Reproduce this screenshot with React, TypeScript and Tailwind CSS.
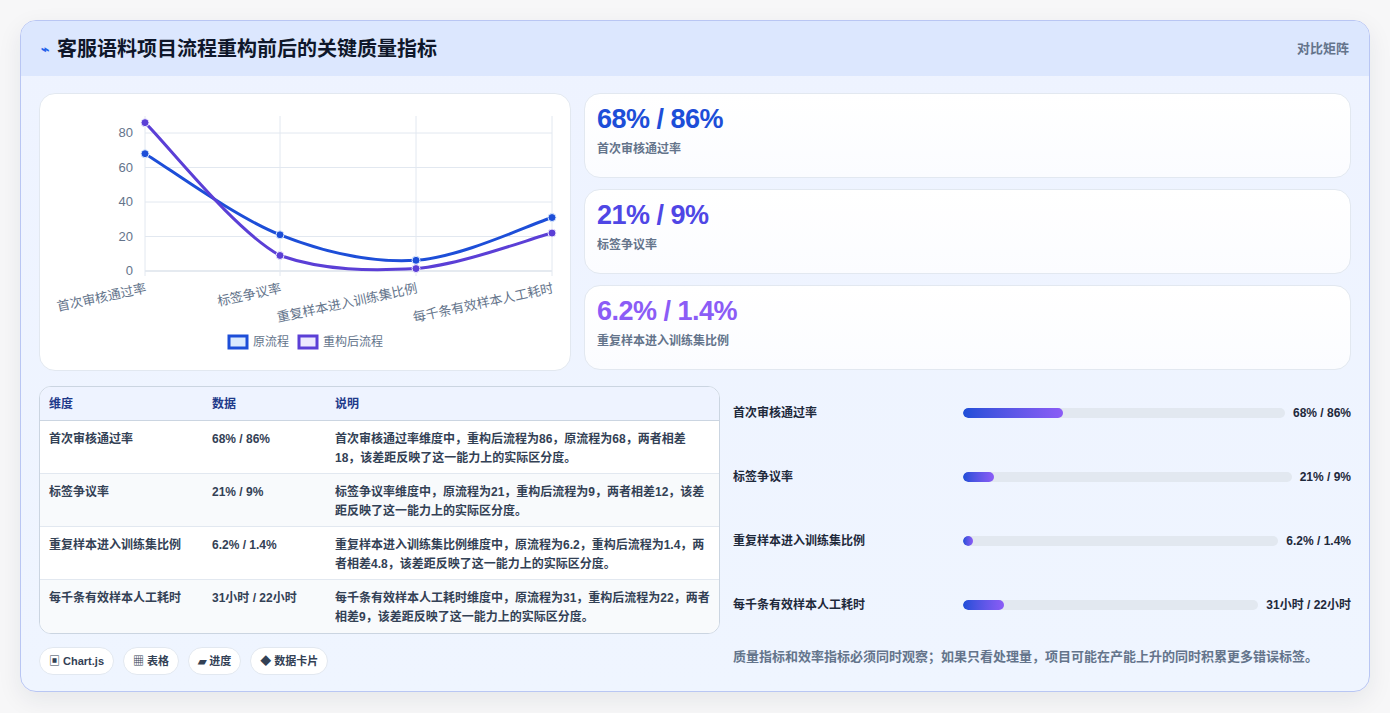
import React from 'react';

const font = { fontFamily: '"Liberation Sans", "Noto Sans CJK SC", sans-serif' };

const rows = [
  { k: '首次审核通过率', v: '68% / 86%', d: '首次审核通过率维度中，重构后流程为86，原流程为68，两者相差18，该差距反映了这一能力上的实际区分度。', p: 31 },
  { k: '标签争议率', v: '21% / 9%', d: '标签争议率维度中，原流程为21，重构后流程为9，两者相差12，该差距反映了这一能力上的实际区分度。', p: 9.5 },
  { k: '重复样本进入训练集比例', v: '6.2% / 1.4%', d: '重复样本进入训练集比例维度中，原流程为6.2，重构后流程为1.4，两者相差4.8，该差距反映了这一能力上的实际区分度。', p: 3.2 },
  { k: '每千条有效样本人工耗时', v: '31小时 / 22小时', d: '每千条有效样本人工耗时维度中，原流程为31，重构后流程为22，两者相差9，该差距反映了这一能力上的实际区分度。', p: 14 },
];

// chart geometry, relative to the chart card
const xs = [105, 240, 376, 512];
const y0 = 177;
const sc = 1.725;
const orig = [68, 21, 6.2, 31];
const next = [86, 9, 1.4, 22];

function smooth(vals: number[]) {
  const pts = vals.map((v, i) => [xs[i], y0 - v * sc]);
  let d = `M${pts[0][0]},${pts[0][1]}`;
  for (let i = 0; i < pts.length - 1; i++) {
    const p0 = pts[Math.max(0, i - 1)];
    const p1 = pts[i];
    const p2 = pts[i + 1];
    const p3 = pts[Math.min(pts.length - 1, i + 2)];
    const t = 0.33;
    const c1 = [p1[0] + (p2[0] - p0[0]) * t / 2, Math.min(y0, p1[1] + (p2[1] - p0[1]) * t / 2)];
    const c2 = [p2[0] - (p3[0] - p1[0]) * t / 2, Math.min(y0, p2[1] - (p3[1] - p1[1]) * t / 2)];
    d += ` C${c1[0]},${c1[1]} ${c2[0]},${c2[1]} ${p2[0]},${p2[1]}`;
  }
  return { d, pts };
}

function Chart() {
  const a = smooth(orig);
  const b = smooth(next);
  return (
    <svg width="531" height="277" viewBox="0 0 531 277" className="block">
      {[0, 20, 40, 60, 80].map((v) => (
        <g key={v}>
          <line x1={105} x2={512} y1={y0 - v * sc} y2={y0 - v * sc} stroke={v === 0 ? '#cbd5e1' : '#e2e8f0'} />
          <text x={93} y={y0 - v * sc + 4} textAnchor="end" fontSize="13" fill="#64748b">{v}</text>
        </g>
      ))}
      {xs.map((x) => (
        <line key={x} x1={x} x2={x} y1={22} y2={y0 + 5} stroke="#e2e8f0" />
      ))}
      {['首次审核通过率', '标签争议率', '重复样本进入训练集比例', '每千条有效样本人工耗时'].map((t, i) => (
        <text key={t} x={xs[i]} y={y0 + 12} textAnchor="end" fontSize="13" fill="#64748b" transform={`rotate(-12 ${xs[i]} ${y0 + 12})`} dominantBaseline="hanging">{t}</text>
      ))}
      <path d={a.d} fill="none" stroke="#1d4ed8" strokeWidth="3" />
      <path d={b.d} fill="none" stroke="#5b3fd6" strokeWidth="3" />
      {a.pts.map((p, i) => <circle key={'a' + i} cx={p[0]} cy={p[1]} r="4" fill="#1d4ed8" stroke="#dbeafe" strokeWidth="1" />)}
      {b.pts.map((p, i) => <circle key={'b' + i} cx={p[0]} cy={p[1]} r="4" fill="#5b3fd6" stroke="#ede9fe" strokeWidth="1" />)}
      <rect x={189} y={242} width={18} height={12} fill="#dbeafe" stroke="#1d4ed8" strokeWidth="3" />
      <text x={213} y={252} fontSize="12" fill="#64748b">原流程</text>
      <rect x={259} y={242} width={18} height={12} fill="#ede9fe" stroke="#5b3fd6" strokeWidth="3" />
      <text x={283} y={252} fontSize="12" fill="#64748b">重构后流程</text>
    </svg>
  );
}

export default function App() {
  return (
    <div className="min-h-screen bg-[#f7f7f8] p-5" style={font}>
      <div className="rounded-2xl border border-[#b9c6f3] bg-gradient-to-b from-[#eef3ff] to-[#eff5ff] overflow-hidden shadow-[0_8px_24px_rgba(30,41,59,0.08)]">
        <div className="flex items-center justify-between h-[55px] bg-[#dce7fe] px-5">
          <div className="flex items-center gap-2">
            <span className="text-[#2563eb] text-sm font-bold">⌁</span>
            <h1 className="text-[20px] font-bold text-[#0f172a]">客服语料项目流程重构前后的关键质量指标</h1>
          </div>
          <span className="text-[13px] font-semibold text-[#64748b]">对比矩阵</span>
        </div>
        <div className="px-[18px] pt-[17px] pb-4">
          <div className="flex gap-[13px]">
            <div className="w-[532px] h-[278px] rounded-2xl bg-white border border-[#e2e8f0]">
              <Chart />
            </div>
            <div className="flex-1 flex flex-col gap-[11px]">
              {[
                ['68% / 86%', '首次审核通过率', 'text-[#1d4ed8]'],
                ['21% / 9%', '标签争议率', 'text-[#4f46e5]'],
                ['6.2% / 1.4%', '重复样本进入训练集比例', 'text-[#8b5cf6]'],
              ].map(([v, l, c]) => (
                <div key={l} className="h-[85px] rounded-2xl bg-gradient-to-b from-white to-[#fbfcff] border border-[#e2e8f0] px-[12px] pt-[5px]">
                  <div className={`text-[27px] font-bold tracking-[-0.5px] ${c}`}>{v}</div>
                  <div className="text-[12px] font-semibold text-[#64748b]">{l}</div>
                </div>
              ))}
            </div>
          </div>
          <div className="flex gap-[13px] mt-[15px]">
            <div className="w-[681px]">
              <div className="rounded-xl border border-[#cbd5e1] overflow-hidden bg-white">
                <div className="flex h-[34px] items-center bg-[#eef3ff] border-b border-[#cbd5e1] text-[12px] font-bold text-[#1e3a8a]">
                  <div className="w-[172px] pl-[9px]">维度</div>
                  <div className="w-[123px]">数据</div>
                  <div className="flex-1">说明</div>
                </div>
                {rows.map((r, i) => (
                  <div key={r.k} className={`flex h-[53px] pt-[9px] text-[12px] font-semibold text-[#334155] leading-[19px] ${i < 3 ? 'border-b border-[#e2e8f0]' : ''} ${i % 2 ? 'bg-[#f8fafc]' : 'bg-white'}`}>
                    <div className="w-[172px] pl-[9px]">{r.k}</div>
                    <div className="w-[123px]">{r.v}</div>
                    <div className="flex-1 pr-2">{r.d}</div>
                  </div>
                ))}
              </div>
              <div className="flex gap-[9px] mt-[13px]">
                {['▣ Chart.js', '▦ 表格', '▰ 进度', '◆ 数据卡片'].map((t) => (
                  <span key={t} className="h-[28px] px-[9px] flex items-center rounded-full bg-white border border-[#e2e8f0] text-[11px] font-semibold text-[#334155]">{t}</span>
                ))}
              </div>
            </div>
            <div className="flex-1 -mt-[5px]">
              {rows.map((r) => (
                <div key={r.k} className="flex items-center h-[64px] text-[12px] font-semibold text-[#1e293b]">
                  <div className="w-[230px] shrink-0">{r.k}</div>
                  <div className="flex-1 h-[10px] rounded-full bg-[#e2e8f0] overflow-hidden">
                    <div className="h-full rounded-full bg-gradient-to-r from-[#1d4ed8] to-[#8b5cf6]" style={{ width: `${r.p}%` }} />
                  </div>
                  <div className="pl-2 whitespace-nowrap">{r.v}</div>
                </div>
              ))}
              <p className="mt-[10px] text-[13px] font-semibold text-[#64748b]">质量指标和效率指标必须同时观察；如果只看处理量，项目可能在产能上升的同时积累更多错误标签。</p>
            </div>
          </div>
        </div>
      </div>
    </div>
  );
}
